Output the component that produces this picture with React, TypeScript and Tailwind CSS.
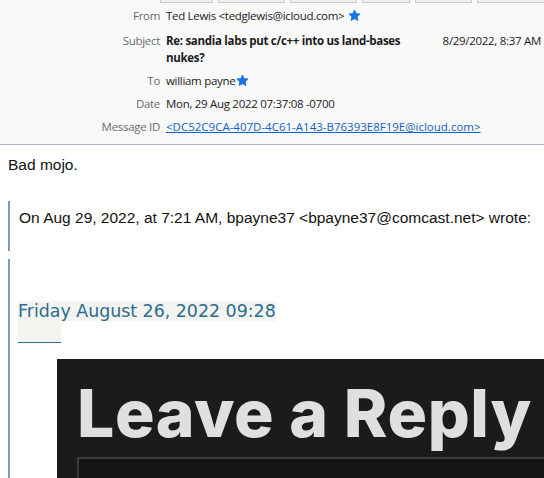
import React from "react";

const Star = () => (
  <svg width="13" height="13" viewBox="0 0 24 24" className="inline-block">
    <path
      d="M12 1.8l3.1 6.6 7.2.9-5.3 5 1.4 7.1L12 17.9l-6.4 3.5 1.4-7.1-5.3-5 7.2-.9z"
      fill="#1a73e8"
      stroke="#1a73e8"
      strokeWidth="1.5"
      strokeLinejoin="round"
    />
  </svg>
);

const hdrFont = { fontFamily: "'Open Sans', 'Liberation Sans', sans-serif" };

export default function App() {
  return (
    <div className="w-[544px] h-[478px] overflow-hidden bg-white">
      {/* Header */}
      <div
        className="h-[145px] overflow-hidden bg-[#f9f9fa] border-b border-[#a9b6c6] text-[11.5px] tracking-[-0.3px] text-[#1b1b1b]"
        style={hdrFont}
      >
        <div className="flex h-[3px] items-end pl-[160px] gap-[5px]">
          <div className="w-[53px] h-[20px] border border-[#c8c8c8] bg-[#f0f0f0] shrink-0" />
          <div className="w-[67px] h-[20px] border border-[#c8c8c8] bg-[#f0f0f0] shrink-0" />
          <div className="w-[67px] h-[20px] border border-[#c8c8c8] bg-[#f0f0f0] shrink-0" />
          <div className="w-[48px] h-[20px] border border-[#c8c8c8] bg-[#f0f0f0] shrink-0" />
          <div className="w-[57px] h-[20px] border border-[#c8c8c8] bg-[#f0f0f0] shrink-0" />
          <div className="w-[80px] h-[20px] border border-[#c8c8c8] bg-[#f0f0f0] shrink-0" />
        </div>
        <div className="grid grid-cols-[160px_1fr] gap-x-[6px] gap-y-[6px] pt-[4px] leading-[17px]">
          <div className="text-right text-[#6b6b6b]">From</div>
          <div className="flex items-center gap-[4px]">
            <span>Ted Lewis &lt;tedglewis@icloud.com&gt;</span>
            <Star />
          </div>

          <div className="text-right text-[#6b6b6b] pt-[2px]">Subject</div>
          <div className="flex pt-[2px]">
            <div className="w-[268px] font-bold">
              Re: sandia labs put c/c++ into us land-bases nukes?
            </div>
            <div className="ml-auto pr-[3px] whitespace-nowrap">8/29/2022, 8:37 AM</div>
          </div>

          <div className="text-right text-[#6b6b6b]">To</div>
          <div className="flex items-center gap-[1px]">
            <span>william payne</span>
            <Star />
          </div>

          <div className="text-right text-[#6b6b6b]">Date</div>
          <div>Mon, 29 Aug 2022 07:37:08 -0700</div>

          <div className="text-right text-[#6b6b6b]">Message ID</div>
          <div>
            <span className="text-[#0f62c6] underline tracking-[0px]">
              &lt;DC52C9CA-407D-4C61-A143-B76393E8F19E@icloud.com&gt;
            </span>
          </div>

          <div className="text-right text-[#6b6b6b]">In reply to</div>
          <div>
            <span className="text-[#0f62c6] underline tracking-[0px]">
              &lt;F7B14A02-A182-4A98-89C5-2A9C0F5C7B8C@comcast.net&gt;
            </span>
          </div>
        </div>
      </div>

      {/* Body */}
      <div
        className="pl-[8px] text-[15.5px] text-[#111]"
        style={{ fontFamily: "'Liberation Sans', Arial, sans-serif" }}
      >
        <div className="pt-[10px] leading-[20px]">Bad mojo.</div>
        <div className="mt-[26px] border-l-2 border-[#7d9bc3] pl-[9px] h-[50px] leading-[20px] pt-[7px]">
          On Aug 29, 2022, at 7:21 AM, bpayne37 &lt;bpayne37@comcast.net&gt; wrote:
        </div>
        <div className="mt-[8px] border-l-2 border-[#7d9bc3] pl-[8px] pt-[42px]">
          <div
            className="text-[17.4px] text-[#2b6d8c] leading-[20px]"
            style={{ fontFamily: "'DejaVu Sans', Verdana, sans-serif" }}
          >
            <span className="bg-[#f3f4f0]">Friday August 26, 2022 09:28</span>
          </div>
          <div className="w-[43px] h-[22px] bg-[#f3f4f0] border-b border-[#2b6d8c]" />
          <div className="ml-[39px] mt-[16px] bg-[#1b1b1b] h-[140px] pl-[20px] pt-[21px]">
            <div
              className="text-[#dfdfdf] font-extrabold text-[66px] leading-[66px] tracking-[0.6px] whitespace-nowrap"
              style={{ fontFamily: "Inter, 'Open Sans', sans-serif" }}
            >
              Leave a Reply
            </div>
            <div className="mt-[11px] h-[60px] border-t-2 border-l-2 border-[#3c3c3c] bg-[#151515]" />
          </div>
        </div>
      </div>
    </div>
  );
}
